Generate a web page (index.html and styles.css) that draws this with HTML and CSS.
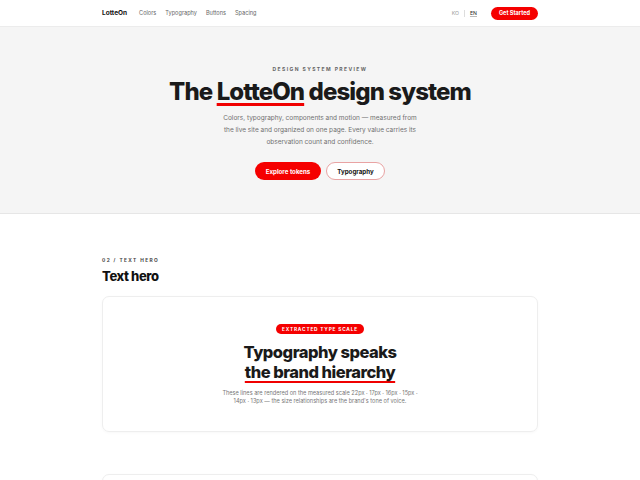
FILE: index.html
```html
<!DOCTYPE html>
<html lang="en">
<head>
<meta charset="utf-8">
<title>LotteOn design system</title>
<link rel="stylesheet" href="styles.css">
</head>
<body>
<header class="nav">
  <div class="nav-inner">
    <a class="logo" href="#">LotteOn</a>
    <nav class="links">
      <a href="#">Colors</a>
      <a href="#">Typography</a>
      <a href="#">Buttons</a>
      <a href="#">Spacing</a>
    </nav>
    <div class="nav-right">
      <span class="lang">KO</span>
      <span class="sep"></span>
      <span class="lang active">EN</span>
      <a class="btn-cta" href="#">Get Started</a>
    </div>
  </div>
</header>

<section class="hero">
  <p class="eyebrow">DESIGN SYSTEM PREVIEW</p>
  <h1 class="hero-title">The <span class="mark">LotteOn</span> design system</h1>
  <p class="hero-text">Colors, typography, components and motion — measured from the live site and organized on one page. Every value carries its observation count and confidence.</p>
  <div class="hero-actions">
    <a class="btn btn-primary" href="#">Explore tokens</a>
    <a class="btn btn-outline" href="#">Typography</a>
  </div>
</section>

<main class="section">
  <p class="section-label">02 / TEXT HERO</p>
  <h2 class="section-title">Text hero</h2>
  <div class="card">
    <span class="badge">EXTRACTED TYPE SCALE</span>
    <h3 class="card-title">Typography speaks<br><span class="mark-sm">the brand hierarchy</span></h3>
    <p class="card-text">These lines are rendered on the measured scale 22px · 17px · 16px · 15px · 14px · 13px — the size relationships are the brand's tone of voice.</p>
  </div>
  <div class="card card-next"></div>
</main>
</body>
</html>
```
FILE: styles.css
```css
* { box-sizing: border-box; }
html, body { margin: 0; padding: 0; }
body {
  font-family: Inter, "Noto Sans", "Liberation Sans", sans-serif;
  color: #111;
  background: #fff;
}
a { text-decoration: none; color: inherit; }
p, h1, h2, h3 { margin: 0; }

.nav {
  height: 27px;
  border-bottom: 1px solid #ececec;
  background: #fff;
}
.nav-inner {
  height: 100%;
  padding: 0 102px;
  display: flex;
  align-items: center;
}
.logo {
  font-size: 6.5px;
  font-weight: 700;
  color: #111;
  margin-right: 12px;
}
.links {
  display: flex;
  gap: 9px;
  font-size: 5.6px;
  color: #666;
}
.nav-right {
  margin-left: auto;
  display: flex;
  align-items: center;
}
.lang {
  font-size: 5.2px;
  color: #999;
}
.lang.active {
  color: #222;
  text-decoration: underline;
  text-decoration-color: #bbb;
  text-underline-offset: 1px;
}
.sep {
  width: 1px;
  height: 7px;
  background: #ddd;
  margin: 0 5px;
}
.btn-cta {
  margin-left: 14px;
  height: 13px;
  width: 47px;
  border-radius: 7px;
  background: #f50000;
  color: #fff;
  font-size: 5.6px;
  font-weight: 700;
  display: flex;
  align-items: center;
  justify-content: center;
}

.hero {
  background: #f5f5f5;
  border-bottom: 1px solid #e6e6e6;
  padding: 38px 0 33px;
  text-align: center;
}
.eyebrow {
  font-size: 5px;
  line-height: 8px;
  font-weight: 700;
  letter-spacing: 1.4px;
  color: #666;
}
.hero-title {
  margin-top: 4px;
  font-size: 24px;
  line-height: 30px;
  font-weight: 800;
  letter-spacing: -0.9px;
  color: #1a1a1a;
}
.mark {
  text-decoration: underline;
  text-decoration-color: #f00000;
  text-decoration-thickness: 2.5px;
  text-underline-offset: 3px;
}
.hero-text {
  margin: 5px auto 0;
  max-width: 204px;
  font-size: 6.5px;
  line-height: 12px;
  color: #707070;
}
.hero-actions {
  margin-top: 14px;
  display: flex;
  justify-content: center;
  gap: 5px;
}
.btn {
  height: 18px;
  border-radius: 9px;
  font-size: 6.2px;
  font-weight: 700;
  display: flex;
  align-items: center;
  justify-content: center;
}
.btn-primary {
  width: 66px;
  background: #f50000;
  color: #fff;
}
.btn-outline {
  width: 59px;
  background: #fff;
  border: 1px solid #e9a3a3;
  color: #111;
}

.section {
  padding: 42px 102px 0;
}
.section-label {
  font-size: 4.8px;
  line-height: 8px;
  font-weight: 700;
  letter-spacing: 1.4px;
  color: #444;
}
.section-title {
  margin-top: 3px;
  font-size: 13px;
  line-height: 18px;
  font-weight: 800;
  letter-spacing: -0.4px;
  color: #111;
}
.card {
  margin-top: 11px;
  border: 1px solid #eeeeee;
  border-radius: 7px;
  box-shadow: 0 1px 3px rgba(0,0,0,0.03);
  padding: 27px 0 26px;
  display: flex;
  flex-direction: column;
  align-items: center;
  text-align: center;
}
.badge {
  height: 10px;
  padding: 0 6px;
  border-radius: 5px;
  background: #f50000;
  color: #fff;
  font-size: 4.8px;
  font-weight: 700;
  letter-spacing: 0.8px;
  display: flex;
  align-items: center;
}
.card-title {
  margin-top: 8px;
  font-size: 16.5px;
  line-height: 20px;
  font-weight: 800;
  letter-spacing: -0.5px;
  color: #1a1a1a;
}
.mark-sm {
  text-decoration: underline;
  text-decoration-color: #f00000;
  text-decoration-thickness: 2px;
  text-underline-offset: 3px;
}
.card-text {
  margin-top: 8px;
  max-width: 204px;
  font-size: 5.6px;
  line-height: 7.5px;
  color: #777;
}
.card-next {
  margin-top: 42px;
  height: 120px;
}
```
